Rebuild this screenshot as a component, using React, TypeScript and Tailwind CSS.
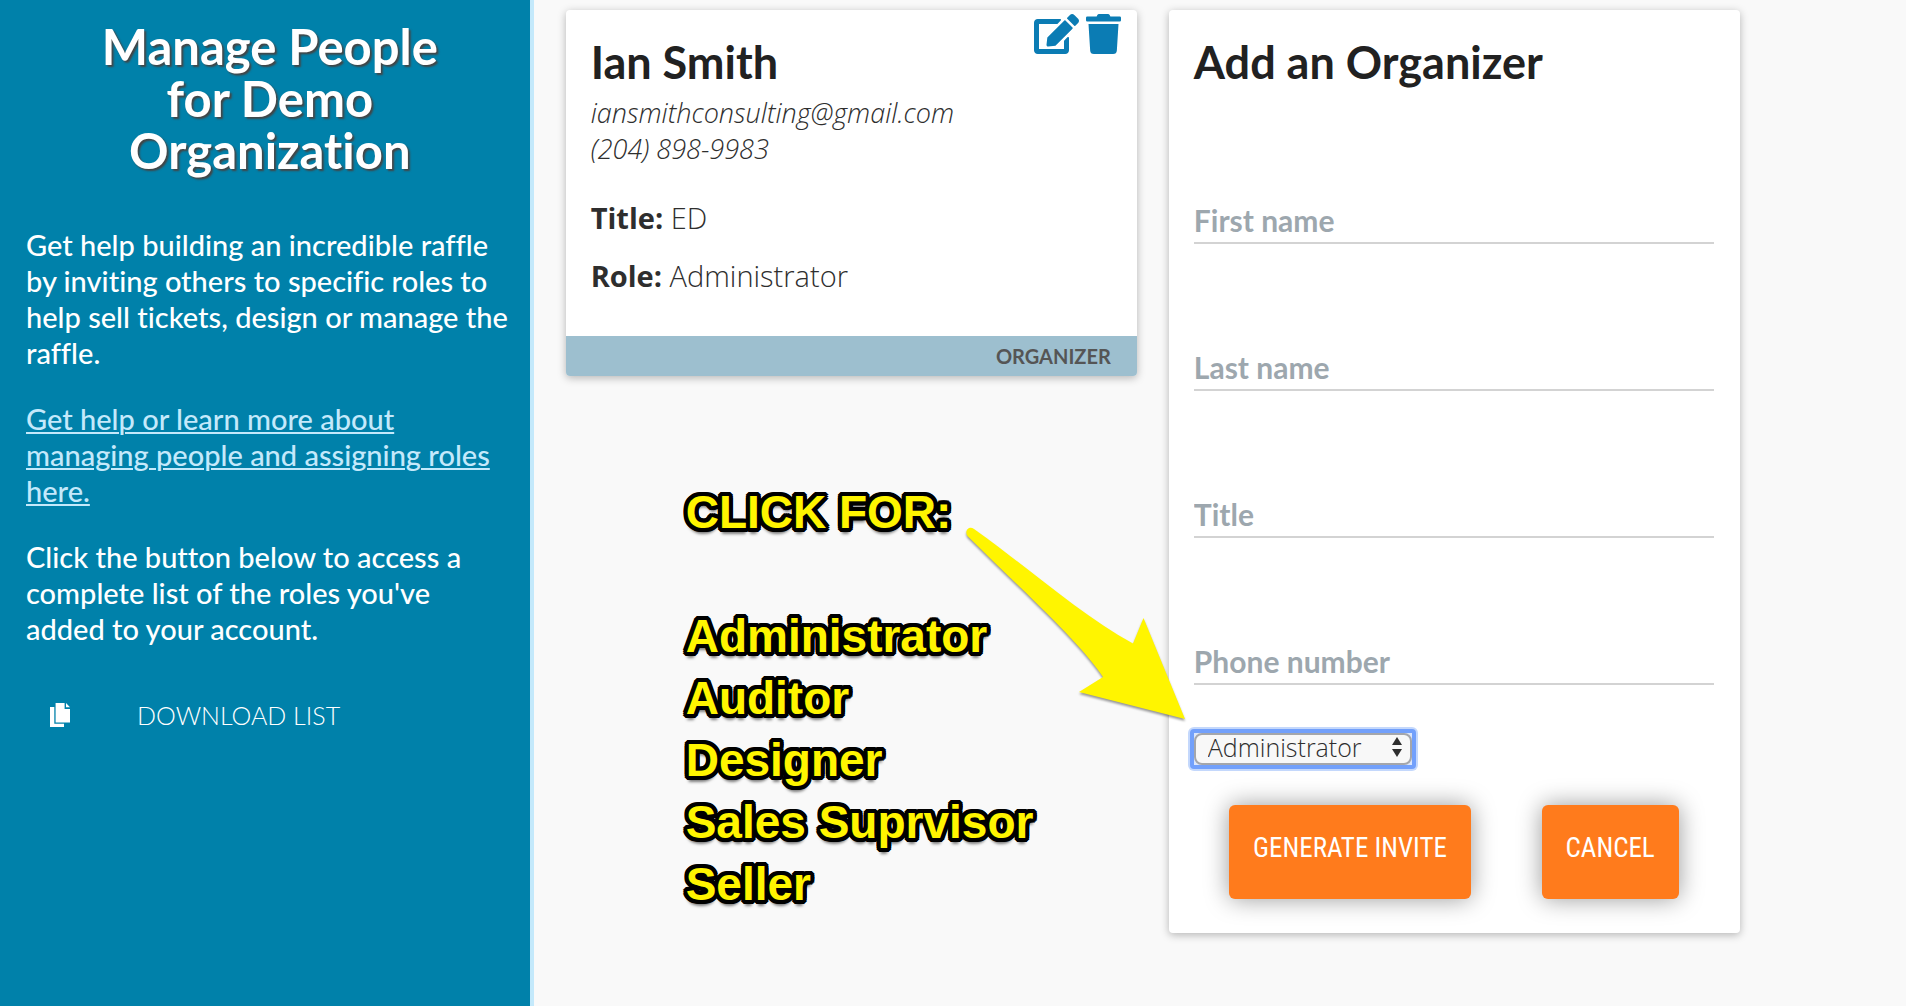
import React, { useState } from 'react';
import { FaEdit, FaTrash } from 'react-icons/fa';

const roles = ['Administrator', 'Auditor', 'Designer', 'Sales Supervisor', 'Seller'];

const fields = [
  { name: 'firstName', label: 'First name' },
  { name: 'lastName', label: 'Last name' },
  { name: 'title', label: 'Title' },
  { name: 'phone', label: 'Phone number' },
];

const CopyIcon = () => (
  <svg viewBox="0 0 20 24" className="w-5 h-6 shrink-0" fill="currentColor" aria-hidden="true">
    <path d="M0 4h4.3v16.8H14V24H0z" />
    <path d="M5.6 0h9v5.9H20v13.6H5.6z" />
    <path d="M16 0l4 4.3h-4z" />
  </svg>
);

const Sidebar = () => (
  <aside className="w-[28%] shrink-0 bg-[#0081aa] border-r-4 border-[#c4e9fb] pt-5 pl-[26px] pr-4 text-white [font-variant-ligatures:none]">
    <h1 className="px-[54px] text-center text-[49px] leading-[52px] font-bold [text-shadow:2px_2px_2px_#444]">
      Manage People for Demo Organization
    </h1>
    <div className="mt-[51px] flex flex-col gap-[30px] text-[29px] leading-9 font-medium">
      <p>
        Get help building an incredible raffle by inviting others to specific roles to help sell tickets, design or
        manage the raffle.
      </p>
      <p>
        <a href="#help" className="text-[#c4e9fb] underline decoration-2 underline-offset-2">
          Get help or learn more about managing people and assigning roles here.
        </a>
      </p>
      <p>Click the button below to access a complete list of the roles you've added to your account.</p>
    </div>
    <button type="button" className="mt-[50px] ml-6 flex items-center gap-[67px] text-[25px] leading-9 font-light">
      <CopyIcon />
      DOWNLOAD LIST
    </button>
  </aside>
);

const PersonCard = () => (
  <section className="rounded-[4px] overflow-hidden bg-white shadow-[0_2px_8px_rgba(0,0,0,0.28)]">
    <div className="flex items-start justify-between pl-[25px] pr-4 pt-1">
      <h2 className="pt-[22px] text-[45px] leading-[52px] font-bold text-[#212121]">Ian Smith</h2>
      <div className="flex gap-[7px] text-[#0b7cb4]">
        <button type="button" aria-label="Edit"><FaEdit className="w-[45px] h-10" /></button>
        <button type="button" aria-label="Delete"><FaTrash className="w-[35px] h-10" /></button>
      </div>
    </div>
    <div className="px-[25px] pb-[42px] font-['Open_Sans',sans-serif] font-light text-[#2e2e2e]">
      <div className="mt-[7px] text-[27px] leading-9 italic">
        <p>iansmithconsulting@gmail.com</p>
        <p>(204) 898-9983</p>
      </div>
      <div className="mt-[33px] flex flex-col gap-[22px] text-[29px] leading-9">
        <p><strong className="font-bold">Title:</strong> ED</p>
        <p><strong className="font-bold">Role:</strong> Administrator</p>
      </div>
    </div>
    <div className="h-10 px-[26px] bg-[#9dbfcf] text-right text-[20px] leading-10 font-bold text-[#555]">ORGANIZER</div>
  </section>
);

// 标注：黄色文字 + 指向下拉框的箭头，黑色圆角描边由多层 text-shadow 组成
const Callout = () => (
  <div className="relative z-10 mt-[105px] ml-[120px] font-['Liberation_Sans',sans-serif] text-[46px] leading-[62px] font-bold text-[#fff500] whitespace-nowrap [text-shadow:4px_0_#000,-4px_0_#000,0_4px_#000,0_-4px_#000,3px_3px_#000,-3px_3px_#000,3px_-3px_#000,-3px_-3px_#000,4px_2px_#000,-4px_2px_#000,4px_-2px_#000,-4px_-2px_#000,2px_4px_#000,-2px_4px_#000,2px_-4px_#000,-2px_-4px_#000,0_6px_3px_rgba(0,0,0,0.5)]">
    <p>CLICK FOR:</p>
    <ul className="mt-[62px]">
      <li>Administrator</li>
      <li>Auditor</li>
      <li>Designer</li>
      <li>Sales Suprvisor</li>
      <li>Seller</li>
    </ul>
    <svg
      viewBox="0 0 240 210"
      className="absolute left-[274px] top-[39px] w-[240px] h-[210px] drop-shadow-[0_2px_1px_rgba(0,0,0,0.4)]"
      aria-hidden="true"
    >
      <path
        d="M14 9C70 49 122 96 173 123.500L183.500 98L225 199L119 172L143 157C120 122 60 68 7.500 16C4 11 9 5 14 9Z"
        fill="#fff500"
      />
    </svg>
  </div>
);

const OrganizerForm = () => {
  const [role, setRole] = useState('Administrator');

  return (
    <form
      className="rounded-[4px] bg-white pl-[25px] pr-[26px] pt-[26px] pb-[34px] shadow-[0_2px_8px_rgba(0,0,0,0.28)]"
      onSubmit={e => e.preventDefault()}
    >
      <h2 className="text-[45px] leading-[52px] font-bold text-[#212121]">Add an Organizer</h2>
      <div className="mt-[114px] flex flex-col gap-[105px]">
        {fields.map(field => (
          <input
            key={field.name}
            type="text"
            name={field.name}
            aria-label={field.label}
            placeholder={field.label}
            className="block w-full h-[42px] pb-[5px] border-b-2 border-[#d3d3d3] text-[30px] leading-9 font-bold text-[#2e2e2e] placeholder:text-[#9da7ae] outline-none"
          />
        ))}
      </div>
      <div className="relative mt-11 -ml-1 w-[226px] rounded-[4px] border-4 border-[#72a0fb] bg-[#dbe6fb] shadow-[0_0_0_2px_#c4d8fc]">
        <select
          aria-label="Role"
          value={role}
          onChange={e => setRole(e.target.value)}
          className="block w-full h-8 pl-3 pb-1 appearance-none rounded-[8px] border-2 border-[#a4a6ab] bg-[#f8f8f8] font-['Open_Sans',sans-serif] text-[25px] leading-6 font-light text-[#2e2e2e] outline-none"
        >
          {roles.map(r => <option key={r}>{r}</option>)}
        </select>
        <svg viewBox="0 0 10 20" className="absolute right-[10px] top-1 w-[10px] h-5 pointer-events-none" fill="#2e2e2e" aria-hidden="true">
          <path d="M5 0l5 8H0zM5 20l5-8H0z" />
        </svg>
      </div>
      <div className="mt-9 flex justify-around font-['Roboto_Condensed',sans-serif] text-[27px] text-white">
        <button type="submit" className="h-[94px] px-6 pb-2 rounded-md bg-[#ff7b1c] shadow-[0_0_24px_rgba(0,0,0,0.4)]">
          GENERATE INVITE
        </button>
        <button type="button" className="h-[94px] px-6 pb-2 rounded-md bg-[#ff7b1c] shadow-[0_0_24px_rgba(0,0,0,0.4)]">
          CANCEL
        </button>
      </div>
    </form>
  );
};

export default function App() {
  return (
    <div className="flex min-h-screen bg-[#f9f9f9] font-['Lato',sans-serif]">
      <Sidebar />
      <main className="flex-1 grid grid-cols-2 items-start gap-8 pt-[10px] pb-8 pl-8 pr-[166px]">
        <div>
          <PersonCard />
          <Callout />
        </div>
        <OrganizerForm />
      </main>
    </div>
  );
}
